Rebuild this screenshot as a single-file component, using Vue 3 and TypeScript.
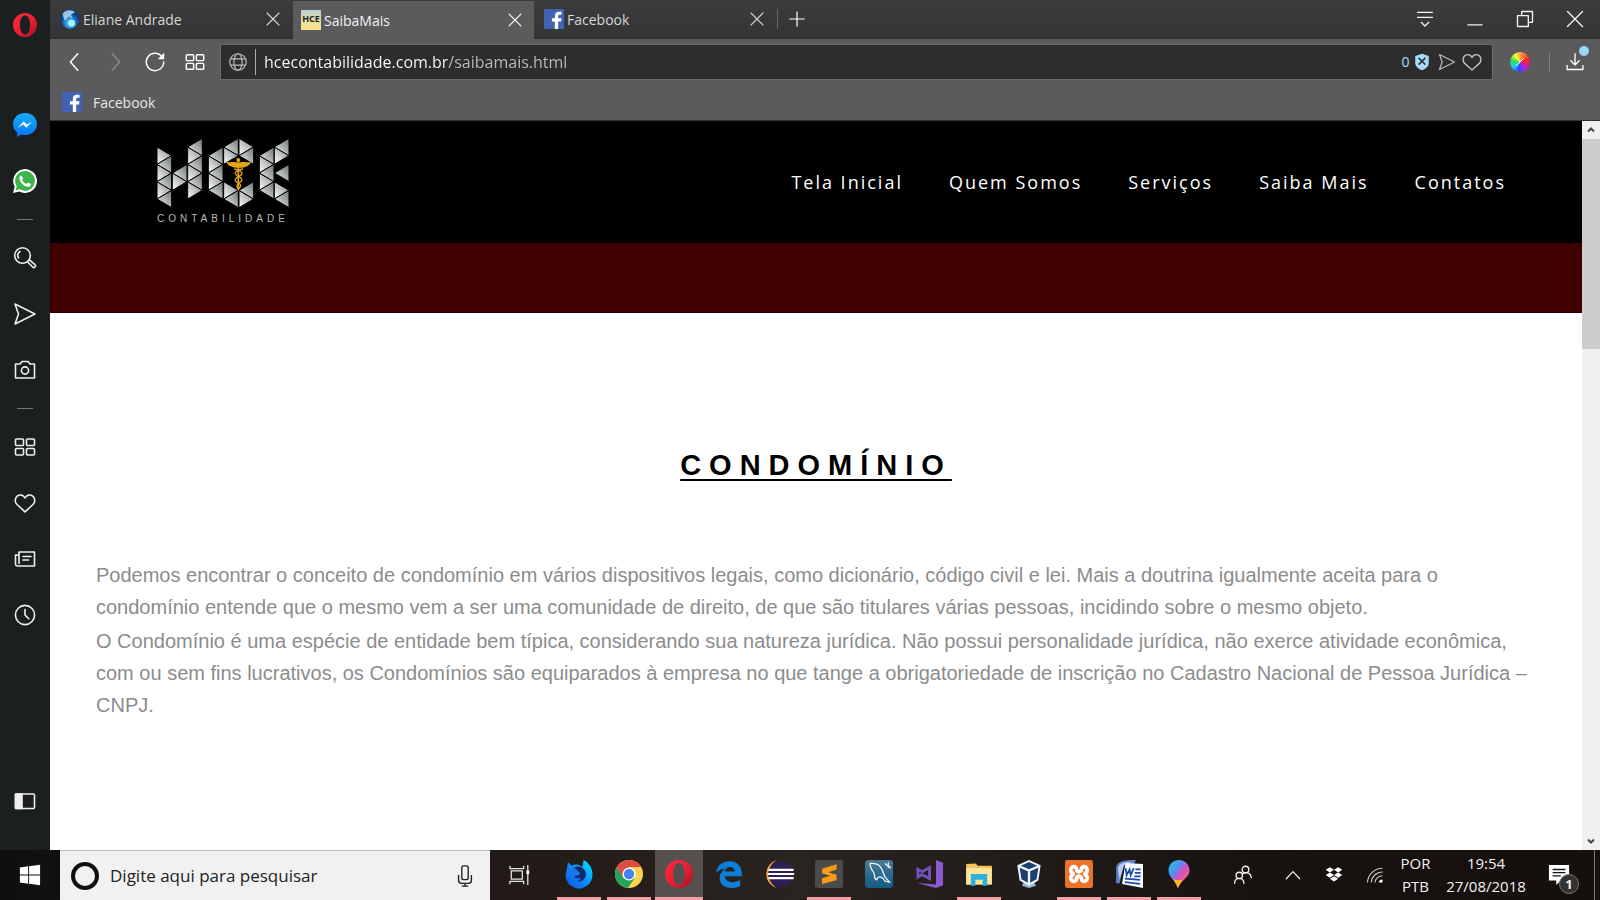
<script setup lang="ts">
import { ref } from 'vue'

interface IconButton { name: string; icon: string }
interface TaskApp extends IconButton { running: boolean; active?: boolean }

const line = 'fill="none" stroke="currentColor" stroke-width="1.6" stroke-linejoin="round" stroke-linecap="round"'

const icons: Record<string, string> = {
  opera: `<defs><linearGradient id="op" x1="0" x2="1" y2="1"><stop offset="0" stop-color="#ff2a3c"/><stop offset=".55" stop-color="#ea1f33"/><stop offset="1" stop-color="#9b1120"/></linearGradient></defs><path fill="url(#op)" fill-rule="evenodd" d="M12 0a12 12 0 0 0 0 24a12 12 0 0 0 0-24ZM12 2.600c3.500 0 5.100 4.600 5.100 9.400s-1.600 9.400-5.100 9.400S6.900 16.800 6.900 12 8.500 2.600 12 2.600Z"/>`,
  messenger: `<defs><linearGradient id="ms" y2="1" x2="0"><stop stop-color="#16aef5"/><stop offset="1" stop-color="#0875f5"/></linearGradient></defs><path fill="url(#ms)" d="M12 0C5.400 0 0 4.700 0 10.900c0 3.400 1.600 6.400 4.200 8.400V24l4.200-2.500c1.100.3 2.300.5 3.600.5 6.600 0 12-4.900 12-11.100S18.600 0 12 0Z"/><path fill="#fff" d="m4.800 14.700 5.900-6.300 3.200 3.200 5.400-3.200-6 6.300-3-3.200Z"/>`,
  whatsapp: `<path fill="#fff" d="M0 24 1.700 17.800A11.900 11.900 0 1 1 6.300 22.400Z"/><path fill="#3cb449" d="m2.600 21.400 1.100-4.100a9.900 9.900 0 1 1 3.100 3Z"/><path fill="#fff" d="M8.400 6.500c-.7-.2-2.400 1-2 3.300.6 3.500 4.200 7.200 7.900 8 2.100.4 3.800-1 3.700-2.800l-3.100-1.600-1.500 1.700c-2.100-.9-3.600-2.400-4.300-4.100l1.200-1.500Z"/>`,
  search: `<g ${line}><circle cx="9.500" cy="9.500" r="7.800"/><path d="M5.500 12A4.500 4.500 0 0 1 7 5.500M14.700 16l5 5a1.600 1.600 0 0 0 2.300-2.300l-5.300-4.600"/></g>`,
  send: `<path ${line} d="M2 2 22 12 2 22 5.500 12Z"/>`,
  camera: `<g ${line}><path d="M2.500 6H7l2-2.500h6L17 6h4.500v14h-19Z"/><circle cx="12" cy="12.500" r="3.600"/></g>`,
  grid: `<g ${line}><rect x="2.500" y="4" width="8" height="6.500" rx="1"/><rect x="13.500" y="4" width="8" height="6.500" rx="1"/><rect x="2.500" y="13.500" width="8" height="6.500" rx="1"/><rect x="13.500" y="13.500" width="8" height="6.500" rx="1"/></g>`,
  heart: `<path ${line} d="M12 20.800 4 13.500C1.300 10.800 2 6.900 4.200 5.100 6.800 3 10.400 3.900 12 7c1.600-3.100 5.200-4 7.800-1.900 2.200 1.800 2.900 5.700.2 8.400Z"/>`,
  news: `<g ${line}><path d="M6 8H2.500v9A2.300 2.300 0 0 0 5 19h16.500V5H6v11.500"/><path d="M10 9.500h8M10 13h5.500"/></g>`,
  clock: `<g ${line}><circle cx="12" cy="12" r="9.600"/><path d="M12 6.500V12l3.800 3.800"/></g>`,
  panel: `<g ${line}><rect x="2.500" y="5" width="19" height="14.500" rx="1"/><path fill="currentColor" d="M2.500 5H9v14.500H2.500Z"/></g>`,
  back: `<path ${line} d="M15 3 7 12l8 9"/>`,
  forward: `<path ${line} d="M9 3 17 12l-8 9"/>`,
  reload: `<path ${line} d="M19.800 6.500A9.500 9.500 0 1 0 21.500 12"/><path fill="currentColor" d="M22 2v7h-7Z"/>`,
  globe: `<g fill="none" stroke="currentColor" stroke-width="1.300"><circle cx="12" cy="12" r="9"/><ellipse cx="12" cy="12" rx="4.500" ry="9"/><path d="M4 8.500h16M4 15.500h16"/></g>`,
  shield: `<path fill="#a6dcfa" d="m12 1 9 3v9c0 5-4 8-9 10-5-2-9-5-9-10V4Z"/><path stroke="#26323a" stroke-width="2" d="m7.500 6.500 9 9m0-9-9 9"/>`,
  menu: `<path ${line} d="M3 4h18M3 10h18M7.500 16l4.500 4.500 4.500-4.500"/>`,
  minimize: `<path ${line} d="M3.500 19h17"/>`,
  restore: `<g ${line}><path d="M3 8h13v13H3Z"/><path d="M8 7.500V3h13v13h-4.500"/></g>`,
  close: `<path ${line} d="m3 3 18 18M21 3 3 21"/>`,
  plus: `<path ${line} d="M12 2.500v19M2.500 12h19"/>`,
  download: `<path ${line} d="M2.500 16v5h19v-5M12 2v13M7 10.500l5 5 5-5"/>`,
  facebook: `<path fill="#4063b3" d="M0 0h24v24H0Z"/><path fill="#fff" d="M13 24v-9H9.500v-3.800H13V8.500c0-3.600 2-5.300 5.200-5.300H21V7h-2c-1.600 0-2 .8-2 2v2.200h4l-.6 3.800H17v9Z"/>`,
  ball: `<defs><radialGradient id="bl" cx=".5" cy=".7"><stop stop-color="#7fe9ff"/><stop offset=".6" stop-color="#1b7ed0"/><stop offset="1" stop-color="#0b3f87"/></radialGradient></defs><ellipse cx="12" cy="12" rx="11" ry="12" fill="url(#bl)"/><path fill="#cfeeff" opacity=".75" d="M3 6C7 0 15 1 18 4l-5 3 2 4-5-2-4 5-2-4Z"/><circle cx="14" cy="17" r="4" fill="#a8f3ff"/>`,
  start: `<path fill="#fff" d="m1 3.800 9-1.300v9H1Zm10-1.400L23 .7v10.800H11ZM1 12.500h9v9L1 20.200Zm10 0h12v10.800L11 21.600Z"/>`,
  mic: `<g fill="none" stroke="#222" stroke-width="1.500"><rect x="8.500" y="1" width="7" height="15" rx="2"/><path d="M5 11v6c0 2 1.500 3 3 3h8c1.500 0 3-1 3-3v-6M12 20v3M8.500 23h7"/></g>`,
  taskview: `<g fill="none" stroke="#e5e5e5" stroke-width="1.400"><path d="M1 2v3h15V2M1 22v-3h15v3M2.500 7.500h12v9h-12ZM20.500 1v22"/></g><path fill="#fff" d="M19 7h3v4h-3Z"/>`,
  firefox: `<defs><linearGradient id="ff" x1="1" x2="0" y2="1"><stop stop-color="#00f0ff"/><stop offset=".5" stop-color="#0a8cff"/><stop offset="1" stop-color="#1553d8"/></linearGradient></defs><path fill="url(#ff)" d="M16 0c4 2 8 7 7.500 13A11.500 11.500 0 1 1 1.600 8L2.500 2l3.300 3C9 3 12 3.500 14.800 6Z"/><path fill="#14296d" d="M7 7c4-3 9-1 10.500 3 2 5-3 9.500-8 8 3 0 4-2 4-3-3 1.500-5 .5-6-1.500l4-.5c2-1.500 1-3-1-3.500Z"/><path fill="#1b78ea" d="m3 8 6-1 3 4-5 4Z"/>`,
  chrome: `<circle cx="12" cy="12" r="12" fill="#fdd24e"/><path fill="#24a35a" d="M1.600 6A12 12 0 0 0 11 24l6.200-9L12 17.500 7 15Z"/><path fill="#dd4c3f" d="M1.600 6 6.800 15 12 6h10.400A12 12 0 0 0 1.600 6Z"/><circle cx="12" cy="12" r="5.600" fill="#fff"/><circle cx="12" cy="12" r="4.400" fill="#3f82f1"/>`,
  edge: `<path fill="#0b7fdb" d="M1 11C1.800 4 7 1 12.500 1 20 1 23 6.500 23 11.500V14H8.500c.3 3.500 3 5 6.300 5 2.600 0 5-.7 6.700-1.800v5C19.500 23.500 16.500 24 14 24 7.500 24 4 20 4 15.500c0-4.200 2.500-6.500 5-8C5.500 7.500 2.500 9 1 11Zm7.500-1.200h8.300C16.700 7.500 15.300 6 13 6c-2.500 0-4.200 1.500-4.500 3.800Z"/>`,
  eclipse: `<path fill="#f5a331" d="M10 0A12.500 12.500 0 0 0 10 24 14 14 0 0 1 10 0Z"/><circle cx="13.500" cy="12" r="10.800" fill="#2b2057"/><path stroke="#fff" stroke-width="1.900" d="M3 8.500h21.500M2.500 12h22.500M3 15.500h21.500"/>`,
  sublime: `<rect width="24" height="24" rx="2" fill="#4b4b4b"/><path fill="#f79a17" d="m6 7.500 12.500-3.900v4.600L11.500 10.500l7 2.200v4.600L6 20.500v-4.800l7-2.200-7-2.200Z"/>`,
  mysql: `<defs><linearGradient id="my" x2="0" y2="1"><stop stop-color="#4c7994"/><stop offset="1" stop-color="#145b86"/></linearGradient></defs><rect width="24" height="24" rx="3" fill="url(#my)"/><path fill="none" stroke="#eaf6ff" stroke-width="1.100" d="M4 3c7-1 10 2 12 9 1 4 4 5 5 7l-4-1c-3-5-6-4-7-1-3-1-1-5-3-7S5 6 4 3M17 3l5 4M20 2v4h2"/>`,
  visual: `<path fill="#8a5bd0" d="m18 0 6 2.300v19.400L18 24 1 19.500l17 1.500Z"/><path fill="none" stroke="#7650bd" stroke-width="2.500" d="M2.500 8v6.500l3.500-2 6.500 3.500V6.500L6 10Z"/>`,
  explorer: `<path fill="#f2c65b" d="M1 3.500 9 3l2 2h12v16H1Z"/><path fill="#ffe49a" d="M1 7h22v14H1Z"/><path fill="#2db1e1" d="M5 12h14v10h-4v-5H9v5H5Z"/>`,
  vbox: `<path fill="#99b7dc" d="M8 18h8l2 4-6 2-6-2Z"/><path fill="#f2f6ff" d="m12 0 10 4.500-2 13L12 22l-8-4.500-2-13Z"/><path fill="#1e3e70" d="m12 1.700 7 3.200L12 8 5 4.900ZM4 6.700l7 3v9.800l-5.500-3ZM20 6.700l-7 3v9.800l5.500-3Z"/>`,
  xampp: `<rect width="24" height="24" rx="2" fill="#ed7128"/><path fill="none" stroke="#fff" stroke-width="3.200" stroke-linejoin="round" d="M10 9C10 4.500 5 5 5 8.500s2 2 2 3.500-2 0-2 3.500S10 19.500 10 15c1-1.500 3-1.500 4 0 0 4.500 5 4 5 .5s-2-2-2-3.500 2 0 2-3.500S14 4.500 14 9c-1 1.500-3 1.500-4 0Z"/>`,
  word: `<path fill="#5b80c7" d="M1 8C1 2 5 0 18 0l-2 4-9 1-3 15H1Z"/><path fill="#b9cdf2" d="M2.500 8C3 3 6 2 15 1.500L8 4 4 17Z"/><path fill="#f8fbff" d="m9 2.500 15 1V24L6 20.500Z"/><path fill="none" stroke="#1f4ba4" stroke-width="1.500" d="m9 7 1 6 2.500-5 1 5L16 7M17.500 8h4.500M17 11h5M16.500 14h5.500M8.500 16l13 1M8.500 19l13 1.500"/>`,
  paint: `<defs><linearGradient id="pt" x2="1" y2="1"><stop stop-color="#10d6f1"/><stop offset=".35" stop-color="#568bee"/><stop offset=".55" stop-color="#d74ec4"/><stop offset="1" stop-color="#ff8a1c"/></linearGradient></defs><path fill="url(#pt)" d="M12 0c5 0 9 4 9 9 0 6-7 8-10 15 0-5-8-8-8-15 0-5 4-9 9-9Z"/><path fill="#ffb51d" d="M7 16c3 2 6 1 8 1l-4 7Z"/>`,
  people: `<g ${line}><circle cx="15" cy="5.500" r="4"/><circle cx="7.500" cy="12.500" r="3.800"/><path d="M2 22c0-3.500 2-6 5.500-6s5.500 2.500 5.500 6M12 10.500c5-3 9.500-.5 10 4.500"/></g>`,
  chevron: `<path ${line} d="m3 17 9-9.500 9 9.500"/>`,
  dropbox: `<path fill="#fff" d="m6.500 1.500 5.500 3.500-5.500 3.500L1 5Zm11 0L23 5l-5.500 3.500L12 5ZM1 12l5.500-3.500L12 12l-5.500 3.500Zm16.500-3.500L23 12l-5.500 3.500L12 12ZM6.500 17l5.500-3.500 5.500 3.500-5.500 3.500Z"/>`,
  wifi: `<g fill="none" stroke="#cbc7c5" stroke-width="1.500"><path d="M2 22A20 20 0 0 1 22 3M7 22A15 15 0 0 1 22 8M12 22a10 10 0 0 1 10-9"/></g><path fill="#fff" d="M17 22a5 5 0 0 1 5-4v4Z"/>`,
  message: `<path fill="#fff" d="M1 1h22v17h-9l-5 5v-5H1Z"/><path stroke="#1a1412" stroke-width="1.400" d="M5 6h14M5 9.500h14M5 13h9"/>`
}

const socialTools: IconButton[] = [
  { name: 'Messenger', icon: 'messenger' },
  { name: 'WhatsApp', icon: 'whatsapp' }
]
const pageTools: IconButton[] = [
  { name: 'Pesquisar', icon: 'search' },
  { name: 'My Flow', icon: 'send' },
  { name: 'Captura', icon: 'camera' }
]
const browserTools: IconButton[] = [
  { name: 'Speed Dial', icon: 'grid' },
  { name: 'Favoritos', icon: 'heart' },
  { name: 'Notícias', icon: 'news' },
  { name: 'Histórico', icon: 'clock' }
]
const tabs = [
  { title: 'Eliane Andrade', icon: 'ball' },
  { title: 'SaibaMais', icon: '' },
  { title: 'Facebook', icon: 'facebook' }
]
const activeTab = ref(1)
const address = ref('hcecontabilidade.com.br/saibamais.html')
const query = ref('')
const links = ['Tela Inicial', 'Quem Somos', 'Serviços', 'Saiba Mais', 'Contatos']
const apps: TaskApp[] = [
  { name: 'Firefox', icon: 'firefox', running: true },
  { name: 'Chrome', icon: 'chrome', running: true },
  { name: 'Opera', icon: 'opera', running: true, active: true },
  { name: 'Edge', icon: 'edge', running: false },
  { name: 'Eclipse', icon: 'eclipse', running: false },
  { name: 'Sublime Text', icon: 'sublime', running: true },
  { name: 'MySQL Workbench', icon: 'mysql', running: false },
  { name: 'Visual Studio', icon: 'visual', running: false },
  { name: 'Explorador', icon: 'explorer', running: true },
  { name: 'VirtualBox', icon: 'vbox', running: false },
  { name: 'XAMPP', icon: 'xampp', running: true },
  { name: 'Word', icon: 'word', running: true },
  { name: 'Paint 3D', icon: 'paint', running: true }
]

/* Logo letters: triangles by column, each given by the height of its tip */
const columns: { x: number; right: number[]; left: number[] }[] = [
  { x: 50, right: [94, 146, 198], left: [120, 172, 224] },
  { x: 96, right: [172], left: [146] },
  { x: 142, right: [94, 146, 198], left: [68, 120, 172] },
  { x: 204, right: [120, 172], left: [94, 146, 198] },
  { x: 250, right: [94, 198], left: [68, 224] },
  { x: 296, right: [68, 224], left: [94, 198] },
  { x: 357, right: [120, 172], left: [94, 146, 198] },
  { x: 402, right: [94, 198], left: [68, 146, 224] }
]
const triangles = columns.flatMap(({ x, right, left }) => [
  ...right.map((y) => ({ points: `${x},${y - 26} ${x},${y + 26} ${x + 44},${y}`, fill: 'url(#steel)' })),
  ...left.map((y) => ({ points: `${x + 44},${y - 26} ${x + 44},${y + 26} ${x},${y}`, fill: 'url(#silver)' }))
])
</script>

<template>
  <div class="desktop">
    <div class="browser">
      <aside class="sidebar">
        <button class="opera" aria-label="Opera"><svg viewBox="0 0 24 24" v-html="icons.opera" /></button>
        <button v-for="t in socialTools" :key="t.name" :aria-label="t.name"><svg viewBox="0 0 24 24" v-html="icons[t.icon]" /></button>
        <span class="dash"></span>
        <button v-for="t in pageTools" :key="t.name" :aria-label="t.name"><svg viewBox="0 0 24 24" v-html="icons[t.icon]" /></button>
        <span class="dash"></span>
        <button v-for="t in browserTools" :key="t.name" :aria-label="t.name"><svg viewBox="0 0 24 24" v-html="icons[t.icon]" /></button>
        <button class="panel" aria-label="Barra lateral"><svg viewBox="0 0 24 24" v-html="icons.panel" /></button>
      </aside>

      <div class="window">
        <div class="tabbar">
          <div v-for="(tab, i) in tabs" :key="tab.title" class="tab" :class="{ active: i === activeTab }">
            <button class="tab-title" @click="activeTab = i">
              <svg v-if="tab.icon" viewBox="0 0 24 24" v-html="icons[tab.icon]" />
              <span v-else class="hce">HCE</span>
              {{ tab.title }}
            </button>
            <button class="tab-close" :aria-label="'Fechar ' + tab.title"><svg viewBox="0 0 24 24" v-html="icons.close" /></button>
          </div>
          <button class="new-tab" aria-label="Nova aba"><svg viewBox="0 0 24 24" v-html="icons.plus" /></button>
          <div class="controls">
            <button v-for="c in ['menu', 'minimize', 'restore', 'close']" :key="c" :aria-label="c"><svg viewBox="0 0 24 24" v-html="icons[c]" /></button>
          </div>
        </div>

        <div class="toolbar">
          <div class="history">
            <button aria-label="Voltar"><svg viewBox="0 0 24 24" v-html="icons.back" /></button>
            <button class="dim" aria-label="Avançar"><svg viewBox="0 0 24 24" v-html="icons.forward" /></button>
            <button aria-label="Recarregar"><svg viewBox="0 0 24 24" v-html="icons.reload" /></button>
            <button aria-label="Speed Dial"><svg viewBox="0 0 24 24" v-html="icons.grid" /></button>
          </div>
          <div class="address">
            <svg class="globe" viewBox="0 0 24 24" v-html="icons.globe" />
            <input v-model="address" type="text" aria-label="Endereço" spellcheck="false" />
            <button class="blocker" aria-label="Bloqueador">0<svg viewBox="0 0 24 24" v-html="icons.shield" /></button>
            <button aria-label="Enviar"><svg viewBox="0 0 24 24" v-html="icons.send" /></button>
            <button aria-label="Favoritar"><svg class="big" viewBox="0 0 24 24" v-html="icons.heart" /></button>
          </div>
          <button class="wheel" aria-label="Seletor de cores"><span></span></button>
          <button class="download" aria-label="Downloads"><svg viewBox="0 0 24 24" v-html="icons.download" /></button>
        </div>

        <div class="bookmarks">
          <a href="#facebook"><svg viewBox="0 0 24 24" v-html="icons.facebook" />Facebook</a>
        </div>

        <div class="viewport">
          <div class="page">
            <header>
              <a class="logo" href="#inicio" aria-label="HCE Contabilidade">
                <svg viewBox="48 38 400 216">
                  <defs>
                    <linearGradient id="steel" x1="0" x2="1" y1="1" y2="0">
                      <stop offset="0" stop-color="#ffffff" /><stop offset="1" stop-color="#808585" />
                    </linearGradient>
                    <linearGradient id="silver" x1="1" x2="0" y1="0" y2="1">
                      <stop offset="0" stop-color="#6d7272" /><stop offset="1" stop-color="#f4f6f6" />
                    </linearGradient>
                  </defs>
                  <polygon v-for="t in triangles" :key="t.points" :points="t.points" :fill="t.fill" stroke="#000" stroke-width="3" />
                  <g fill="none" stroke="#e0a51b" stroke-width="5">
                    <path d="M294 106v92" />
                    <path d="M282 134c24 6 30 14 14 22s-14 14-2 20 6 12 0 18" stroke-width="4" />
                    <path d="M308 134c-26 6-30 14-14 22s12 14 2 20-6 12-2 18" stroke-width="4" />
                  </g>
                  <path fill="#e0a51b" d="M258 112c14 4 24-2 36 4 12-6 22 0 38-4-4 12-16 18-36 18s-34-6-38-18Z" />
                  <circle cx="294" cy="107" r="6" fill="#e0a51b" />
                </svg>
                <span>CONTABILIDADE</span>
              </a>
              <nav>
                <a v-for="l in links" :key="l" href="#menu">{{ l }}</a>
              </nav>
            </header>
            <div class="band"></div>
            <main>
              <h1>CONDOMÍNIO</h1>
              <p>Podemos encontrar o conceito de condomínio em vários dispositivos legais, como dicionário, código civil e lei. Mais a doutrina igualmente aceita para o condomínio entende que o mesmo vem a ser uma comunidade de direito, de que são titulares várias pessoas, incidindo sobre o mesmo objeto.</p>
              <p>O Condomínio é uma espécie de entidade bem típica, considerando sua natureza jurídica. Não possui personalidade jurídica, não exerce atividade econômica, com ou sem fins lucrativos, os Condomínios são equiparados à empresa no que tange a obrigatoriedade de inscrição no Cadastro Nacional de Pessoa Jurídica – CNPJ.</p>
            </main>
          </div>
          <div class="scrollbar">
            <button aria-label="Rolar para cima"><svg viewBox="0 0 10 10"><path d="M2 6.500 5 3.500l3 3" /></svg></button>
            <div class="thumb"></div>
            <button class="down" aria-label="Rolar para baixo"><svg viewBox="0 0 10 10"><path d="m2 3.500 3 3 3-3" /></svg></button>
          </div>
        </div>
      </div>
    </div>

    <footer class="taskbar">
      <button class="start" aria-label="Iniciar"><svg viewBox="0 0 24 24" v-html="icons.start" /></button>
      <label class="finder">
        <span class="ring"></span>
        <input v-model="query" type="text" placeholder="Digite aqui para pesquisar" aria-label="Pesquisar" />
        <svg viewBox="0 0 24 24" v-html="icons.mic" />
      </label>
      <button class="taskview" aria-label="Visão de tarefas"><svg viewBox="0 0 24 24" v-html="icons.taskview" /></button>
      <div class="apps">
        <button v-for="a in apps" :key="a.name" :class="{ running: a.running, active: a.active }" :aria-label="a.name">
          <svg viewBox="0 0 24 24" v-html="icons[a.icon]" />
        </button>
      </div>
      <div class="tray">
        <button class="people" aria-label="Pessoas"><svg viewBox="0 0 24 24" v-html="icons.people" /></button>
        <button aria-label="Ícones ocultos"><svg viewBox="0 0 24 24" v-html="icons.chevron" /></button>
        <button aria-label="Dropbox"><svg viewBox="0 0 24 24" v-html="icons.dropbox" /></button>
        <button aria-label="Rede"><svg viewBox="0 0 24 24" v-html="icons.wifi" /></button>
        <button class="lang"><span>POR</span><span>PTB</span></button>
        <button class="time"><span>19:54</span><span>27/08/2018</span></button>
        <button class="notices" aria-label="Notificações"><svg viewBox="0 0 24 24" v-html="icons.message" /><b>1</b></button>
      </div>
    </footer>
  </div>
</template>

<style>
body { margin: 0; }
</style>

<style scoped>
* { box-sizing: border-box; }
.desktop { display: flex; flex-direction: column; height: 100vh; min-width: 1280px; overflow: hidden; font-family: "Open Sans", "Noto Sans", sans-serif; font-size: 14px; color: #e8e8e8; }
button { display: flex; align-items: center; justify-content: center; padding: 0; border: 0; background: none; color: inherit; font: inherit; }
svg { display: block; flex: none; }
a { color: inherit; text-decoration: none; }
input { min-width: 0; padding: 0; border: 0; outline: 0; background: none; font: inherit; }

.browser { display: flex; flex: 1; min-height: 0; }
.sidebar { display: flex; flex-direction: column; align-items: center; width: 50px; padding-bottom: 21px; background: #1b1f20; color: #eee; }
.sidebar button { width: 50px; height: 56px; }
.sidebar button svg { width: 24px; height: 24px; }
.sidebar .opera { height: 50px; margin-bottom: 47px; }
.sidebar .panel { margin-top: auto; }
.dash { width: 16px; height: 1px; margin: 10px 0; background: #777; }
.window { display: flex; flex: 1; flex-direction: column; min-width: 0; }

.tabbar { display: flex; height: 39px; border-bottom: 1px solid #303031; background: linear-gradient(#3c3c3e, #343436); }
.tab { display: flex; align-items: center; width: 243px; padding: 0 12px 0 10px; color: #d5d5d5; }
.tab.active { width: 241px; height: 39px; padding: 0 11px 0 8px; border-top: 1px solid #39393b; background: #5b5b5d; color: #f2f2f2; }
.tab-title { flex: 1; justify-content: flex-start; height: 100%; gap: 3px; }
.tab-title svg { width: 20px; height: 20px; }
.hce { width: 20px; height: 20px; background: linear-gradient(#b9cfd2, #eadf9e 60%, #ffe08a); color: #222; font-size: 9px; font-weight: 700; line-height: 18px; text-align: center; }
.tab-close svg { width: 16px; height: 16px; }
.new-tab { width: 39px; height: 20px; margin-top: 9px; border-left: 1px solid #666; color: #fff; }
.new-tab svg { width: 18px; height: 18px; }
.controls { display: flex; margin-left: auto; color: #f4f4f4; }
.controls button { width: 50px; }
.controls svg { width: 20px; height: 20px; }

.toolbar { display: flex; align-items: center; height: 45px; background: #5b5b5d; }
.history { display: flex; gap: 2px; padding: 0 6px; }
.history button { width: 38px; height: 40px; color: #fff; }
.history svg { width: 22px; height: 22px; }
.history .dim { color: #8a8a8c; }
.address { display: flex; flex: 1; align-items: center; height: 36px; padding: 0 8px 0 6px; border: 1px solid #6b6b6d; background: #2d2d2d; color: #bbb; font-size: 16px; }
.address svg { width: 18px; height: 18px; }
.address .globe { width: 22px; height: 22px; margin-right: 6px; }
.address input { flex: 1; height: 26px; padding-left: 8px; border-left: 1px solid #aaa; background: linear-gradient(90deg, #fff 191px, #bdbdbd 191px) text; color: transparent; }
.address button { width: 25px; }
.address .big { width: 22px; height: 22px; }
.address .blocker { width: 36px; gap: 3px; color: #a6dcfa; font-size: 14px; }
.wheel { width: 56px; padding-right: 3px; }
.wheel span { width: 20px; height: 20px; border-radius: 50%; background: linear-gradient(135deg, transparent 46%, #fff 46%, #fff 54%, transparent 54%) center / 8px 8px no-repeat, conic-gradient(#fa4, #f22 20%, #a2e 40%, #34f 52%, #2ce 65%, #3d5 78%, #ef3 90%, #fa4); }
.download { position: relative; width: 51px; height: 20px; border-left: 1px solid #828284; color: #fff; }
.download svg { width: 20px; height: 20px; }
.download::after { position: absolute; top: -6px; right: 11px; width: 10px; height: 10px; border-radius: 50%; background: #9ad8fb; content: ""; }
.bookmarks { display: flex; height: 37px; padding-left: 12px; border-bottom: 1px solid #333; background: #5b5b5d; }
.bookmarks a { display: flex; align-items: center; gap: 11px; height: 36px; }
.bookmarks svg { width: 20px; height: 20px; }

.viewport { display: flex; flex: 1; min-height: 0; background: #fff; }
.page { flex: 1; overflow: hidden; }
header { display: flex; align-items: center; justify-content: space-between; height: 122px; padding: 0 76px 0 106px; background: #000; }
.logo { display: flex; flex-direction: column; gap: 4px; width: 136px; padding-bottom: 2px; }
.logo svg { width: 134px; height: 72px; }
.logo span { color: #b9b9b9; font: 10px/12px "Liberation Sans", Arial, sans-serif; letter-spacing: 4px; padding-left: 1px; }
nav { display: flex; gap: 46px; color: #fff; font-size: 18px; letter-spacing: 2px; }
.band { height: 70px; border-bottom: 1px solid #200; background: #400000; }
main { padding: 134px 46px 0; font-family: "Liberation Sans", Arial, sans-serif; }
h1 { margin: 0 0 76px; color: #000; font-size: 29px; line-height: 36px; letter-spacing: 8px; text-align: center; text-decoration: underline; text-decoration-thickness: 2px; text-underline-offset: 4px; }
p { margin: 0 0 2px; color: #8c8c8c; font-size: 20px; line-height: 32px; }
.scrollbar { display: flex; flex-direction: column; width: 18px; background: #f0f0f0; }
.scrollbar button { height: 18px; }
.scrollbar svg { width: 10px; height: 10px; fill: none; stroke: #444; stroke-width: 2; }
.thumb { height: 210px; background: #cdcdcd; }
.scrollbar .down { margin-top: auto; }

.taskbar { display: flex; height: 50px; background: linear-gradient(90deg, #100f0f, #221a16 32%, #2a2421 50%, #17110f 80%, #150f0d); font-size: 15px; }
.start { width: 60px; }
.start svg { width: 22px; height: 22px; }
.finder { display: flex; flex: 0 1 430px; align-items: center; padding: 0 14px 0 11px; border-top: 1px solid #bbb; background: #f1f1f1; }
.ring { width: 28px; height: 28px; border: 4px solid #111; border-radius: 50%; }
.finder input { flex: 1; margin-left: 11px; color: #222; font-size: 17px; }
.finder input::placeholder { color: #222; opacity: 1; }
.finder svg { width: 22px; height: 22px; }
.taskview { width: 65px; padding-right: 5px; }
.taskview svg { width: 22px; height: 22px; }
.apps { display: flex; gap: 2px; }
.apps button { width: 48px; border-bottom: 3px solid transparent; }
.apps svg { width: 28px; height: 28px; overflow: visible; }
.apps .running { border-image: linear-gradient(90deg, transparent 5px, #f0a1a6 5px, #f0a1a6 43px, transparent 43px) 3; border-width: 0 0 3px; border-style: solid; }
.apps .active { border-image: none; border-bottom: 3px solid #f0a1a6; background: #55504e; }
.tray { display: flex; margin-left: auto; padding-right: 5px; color: #f2f2f2; }
.tray button { width: 41px; }
.tray svg { width: 18px; height: 18px; }
.tray .people { width: 59px; }
.tray .people svg { width: 20px; height: 20px; }
.tray .lang, .tray .time { flex-direction: column; line-height: 23px; }
.tray .time { width: 100px; }
.tray .notices { position: relative; width: 59px; padding-right: 12px; border-right: 1px solid #777; }
.tray .notices svg { width: 22px; height: 22px; }
.notices b { position: absolute; right: 15px; bottom: 6px; width: 20px; height: 20px; border: 1px solid #777; border-radius: 50%; background: #333; font-size: 13px; line-height: 18px; }
</style>
